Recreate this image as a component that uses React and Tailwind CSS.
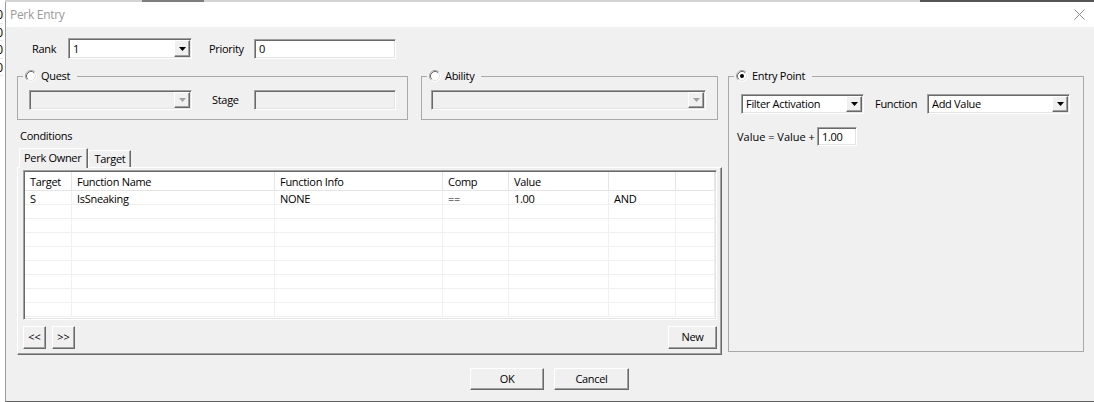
import React from 'react';

// classic 3D edges
const SUNKEN =
  'border border-t-[#a0a0a0] border-l-[#a0a0a0] border-r-white border-b-white shadow-[inset_1px_1px_0_#696969,inset_-1px_-1px_0_#e3e3e3]';
const RAISED =
  'border border-t-white border-l-white border-r-[#696969] border-b-[#696969] shadow-[inset_-1px_-1px_0_#a0a0a0]';

const columns = ['Target', 'Function Name', 'Function Info', 'Comp', 'Value', '', ''];

const conditions = [
  ['S', 'IsSneaking', 'NONE', '==', '1.00', 'AND', ''],
  ...Array.from({ length: 8 }, () => ['', '', '', '', '', '', '']),
];

function Radio({ checked }) {
  return (
    <svg width="12" height="12" viewBox="0 0 12 12" className="shrink-0">
      <circle cx="6" cy="6" r="5" fill="#fff" />
      <path d="M2.11 9.89A5.5 5.5 0 0 1 9.89 2.11" fill="none" stroke="#a0a0a0" />
      <path d="M9.89 2.11A5.5 5.5 0 0 1 2.11 9.89" fill="none" stroke="#fff" />
      <path d="M2.82 9.18A4.5 4.5 0 0 1 9.18 2.82" fill="none" stroke="#696969" />
      <path d="M9.18 2.82A4.5 4.5 0 0 1 2.82 9.18" fill="none" stroke="#e3e3e3" />
      {checked && <circle cx="6" cy="6" r="2" fill="#000" />}
    </svg>
  );
}

function Arrow({ disabled }) {
  return (
    <svg width="7" height="4" viewBox="0 0 7 4">
      <polygon points="0,0 7,0 3.5,4" fill={disabled ? '#a0a0a0' : '#000'} />
    </svg>
  );
}

function Combo({ value = '', disabled, className }) {
  return (
    <div className={`${SUNKEN} ${disabled ? 'bg-[#f0f0f0]' : 'bg-white'} flex p-[1px] ${className}`}>
      <span className="flex-1 pl-[3px] pt-[1px] flex items-center whitespace-nowrap">{value}</span>
      <span className={`${RAISED} w-[16px] bg-[#f0f0f0] flex items-center justify-center`}>
        <Arrow disabled={disabled} />
      </span>
    </div>
  );
}

function TextBox({ value = '', disabled, className }) {
  return (
    <div className={`${SUNKEN} ${disabled ? 'bg-[#f0f0f0]' : 'bg-white'} flex items-center px-[4px] pt-[1px] ${className}`}>
      {value}
    </div>
  );
}

function Button({ children, className }) {
  return (
    <button className={`${RAISED} bg-[#f0f0f0] flex items-center justify-center ${className}`}>
      {children}
    </button>
  );
}

function Group({ label, checked, className, children }) {
  return (
    <fieldset className={`border border-[#a9a9a9] min-w-0 ${className}`}>
      <legend className="ml-[5px] pl-[2px] pr-[7px] h-[14px]">
        <span className="flex items-center gap-[4px] h-[14px]">
          <Radio checked={checked} />
          <span>{label}</span>
        </span>
      </legend>
      {children}
    </fieldset>
  );
}

function ConditionsList() {
  return (
    <div className={`${SUNKEN} bg-white h-[150px] p-[1px] overflow-hidden`}>
      <div className="grid grid-cols-[47px_203px_168px_66px_100px_67px_1fr] h-[19px] border-b border-[#e5e5e5]">
        {columns.map((c, i) => (
          <div key={i} className="border-r border-[#e5e5e5] pl-[5px] pt-[2px] flex items-center whitespace-nowrap">
            {c}
          </div>
        ))}
      </div>
      {conditions.map((row, r) => (
        <div key={r} className="grid grid-cols-[47px_203px_168px_66px_100px_67px_1fr] h-[14px] border-b border-[#f0f0f0]">
          {row.map((cell, i) => (
            <div key={i} className="border-r border-[#f0f0f0] pl-[5px] pt-[2px] flex items-center leading-none whitespace-nowrap">
              {cell}
            </div>
          ))}
        </div>
      ))}
    </div>
  );
}

export default function App() {
  return (
    <div className="w-[1094px] h-[402px] flex overflow-hidden bg-white text-[11px] tracking-[-0.3px] text-black font-['Open_Sans','Noto_Sans',sans-serif]">
      {/* sheet peeking out behind the dialog */}
      <div className="w-[5px] shrink-0 flex flex-col items-end pr-[2px] pt-[6px] text-[12px] leading-[17.5px] tracking-normal overflow-hidden">
        {['0', '0', '0', '0', '', '', '', '', '', '', '', '', '', '', '', '', '', '', '', '', ''].map((d, i) => (
          <div key={i} className="h-[17.5px] border-b border-[#e6e6e6]">{d}</div>
        ))}
      </div>

      <div className="flex-1 flex flex-col">
        <div className="h-[2px] flex bg-[#d4d4d4]">
          <div className="ml-[137px] w-[62px] bg-[#7d7d7d]" />
          <div className="ml-auto w-[174px] bg-[#555]" />
        </div>

        <div className="flex-1 flex flex-col border-l border-b border-l-[#9a9a9a] border-b-[#5f5f5f]">
          {/* title bar */}
          <div className="h-[25px] bg-white flex items-center pl-[4px] pr-[9px]">
            <span className="text-[12px] text-[#9a9a9a]">Perk Entry</span>
            <svg width="11" height="11" viewBox="0 0 11 11" className="ml-auto">
              <path d="M0.5 0.5L10.5 10.5M10.5 0.5L0.5 10.5" stroke="#8c8c8c" strokeWidth="1" />
            </svg>
          </div>

          <div className="flex-1 bg-[#f0f0f0] flex flex-col pl-[11px]">
            <div className="mt-[11px] h-[21px] flex items-center pl-[15px]">
              <span className="w-[36px] pt-[1px]">Rank</span>
              <Combo value="1" className="w-[124px] h-[21px]" />
              <span className="ml-[17px] w-[45px] pt-[1px]">Priority</span>
              <TextBox value="0" className="w-[142px] h-[20px]" />
            </div>

            <div className="mt-[10px] flex gap-[6px]">
              <div className="w-[705px] flex flex-col">
                <div className="flex">
                  <Group label="Quest" className="w-[391px] h-[51px]">
                    <div className="flex items-center pl-[11px] pt-[7px]">
                      <Combo disabled className="w-[163px] h-[20px]" />
                      <span className="ml-[20px] w-[42px] pt-[1px]">Stage</span>
                      <TextBox disabled className="w-[142px] h-[20px]" />
                    </div>
                  </Group>
                  <Group label="Ability" className="ml-[13px] w-[297px] h-[51px]">
                    <div className="pl-[9px] pt-[7px]">
                      <Combo disabled className="w-[275px] h-[20px]" />
                    </div>
                  </Group>
                </div>

                <div className="mt-[9px] pl-[3px] leading-[14px]">Conditions</div>

                <div className="mt-[5px] h-[19px] flex items-end pl-[2px]">
                  <div className="relative z-10 -mb-px h-[20px] pl-[4px] pr-[6px] bg-[#f0f0f0] flex items-center border-t border-l border-t-white border-l-white border-r border-r-[#696969] shadow-[inset_-1px_0_0_#a0a0a0]">
                    Perk Owner
                  </div>
                  <div className="h-[17px] px-[5px] flex items-center border-t border-l border-t-white border-l-white border-r border-r-[#696969] shadow-[inset_-1px_0_0_#a0a0a0]">
                    Target
                  </div>
                </div>

                <div className={`${RAISED} h-[188px] pl-[5px] pr-[4px] pt-[2px] flex flex-col`}>
                  <ConditionsList />
                  <div className="mt-[6px] h-[23px] flex">
                    <Button className="w-[23px] tracking-normal">&lt;&lt;</Button>
                    <Button className="ml-[6px] w-[23px] tracking-normal">&gt;&gt;</Button>
                    <Button className="ml-auto w-[49px]">New</Button>
                  </div>
                </div>
              </div>

              <Group label="Entry Point" checked className="w-[356px] h-[283px]">
                <div className="pl-[12px] pt-[11px] flex items-center">
                  <Combo value="Filter Activation" className="w-[123px] h-[20px]" />
                  <span className="ml-[11px] w-[52px] pt-[1px]">Function</span>
                  <Combo value="Add Value" className="w-[143px] h-[20px]" />
                </div>
                <div className="mt-[13px] pl-[8px] flex items-center">
                  <span className="pt-[1px] tracking-normal">Value = Value +</span>
                  <TextBox value="1.00" className="ml-[2px] w-[40px] h-[19px]" />
                </div>
              </Group>
            </div>

            <div className="mt-[13px] flex ml-[453px] gap-[10px]">
              <Button className="w-[74px] h-[22px]">OK</Button>
              <Button className="w-[75px] h-[22px]">Cancel</Button>
            </div>
          </div>
        </div>
      </div>
    </div>
  );
}
